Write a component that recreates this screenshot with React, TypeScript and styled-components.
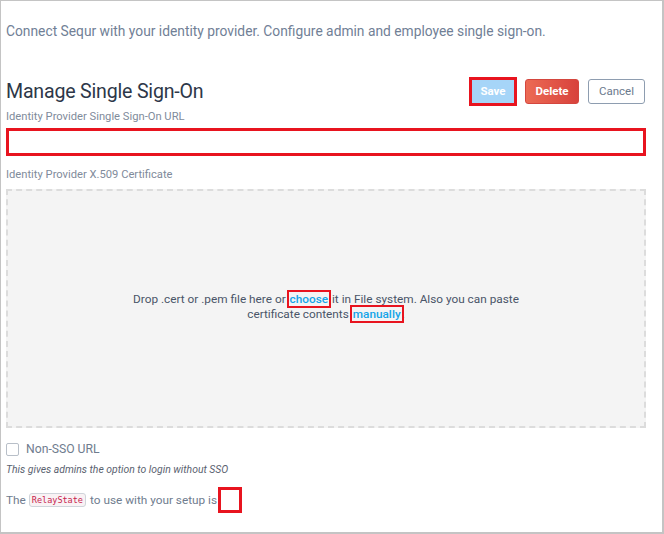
import React from "react";
import styled, { createGlobalStyle } from "styled-components";

const Global = createGlobalStyle`
  html, body { margin: 0; padding: 0; background: #fff; }
  body { font-family: Roboto, "Liberation Sans", Arial, sans-serif; }
  * { box-sizing: border-box; }
`;

const Frame = styled.div`
  width: 664px;
  height: 534px;
  border-top: 1px solid #c4c4c4;
  border-left: 1px solid #c4c4c4;
  border-right: 2px solid #c4c4c4;
  border-bottom: 2px solid #c4c4c4;
  padding: 0 17px 0 5px;
  overflow: hidden;
`;

const Intro = styled.p`
  margin: 21px 0 0;
  font-size: 13.8px;
  line-height: 18px;
  color: #718096;
`;

const HeaderRow = styled.div`
  display: flex;
  align-items: center;
  justify-content: space-between;
  margin-top: 38px;
  height: 26px;
`;

const Title = styled.h1`
  margin: 0;
  font-size: 19.6px;
  font-weight: 400;
  color: #2d3748;
  letter-spacing: -0.2px;
`;

const Actions = styled.div`
  display: flex;
  align-items: center;
  gap: 9px;
`;

const Mark = styled.span`
  display: inline-flex;
  border: 3px solid #e8141f;
  margin-right: -1px;
`;

const Button = styled.button<{ $variant: "save" | "delete" | "cancel" }>`
  height: ${(p) => (p.$variant === "save" ? "23px" : "25px")};
  width: ${(p) => (p.$variant === "save" ? "42px" : p.$variant === "delete" ? "54px" : "57px")};
  padding: 0;
  border-radius: ${(p) => (p.$variant === "save" ? "0" : "3px")};
  font-family: inherit;
  font-size: 11.5px;
  font-weight: ${(p) => (p.$variant === "cancel" ? 400 : 700)};
  cursor: pointer;
  border: 1px solid
    ${(p) =>
      p.$variant === "save" ? "#a6d5f8" : p.$variant === "delete" ? "#d4463e" : "#8e9db0"};
  background: ${(p) =>
    p.$variant === "save"
      ? "#a6d5f8"
      : p.$variant === "delete"
      ? "linear-gradient(90deg, #ec6a54, #d8423c)"
      : "#fff"};
  color: ${(p) => (p.$variant === "cancel" ? "#6b7a8d" : "#fff")};
`;

const Label = styled.div<{ $top: number }>`
  margin-top: ${(p) => p.$top}px;
  font-size: 11.2px;
  line-height: 14px;
  color: #7f8b9b;
`;

const UrlInput = styled.input`
  display: block;
  width: 640px;
  height: 28px;
  margin-top: 4px;
  border: 3px solid #e8141f;
  background: #fff;
  outline: none;
`;

const DropZone = styled.div`
  margin-top: 7px;
  width: 640px;
  height: 239px;
  background: #f4f4f4;
  border: 2px dashed #dcdcdc;
  display: flex;
  align-items: center;
  justify-content: center;
  text-align: center;
  padding-bottom: 3px;
`;

const DropText = styled.p`
  margin: 0;
  width: 420px;
  font-size: 11.8px;
  line-height: 15px;
  color: #4a5568;
`;

const Link = styled.a`
  color: #15a4e8;
  font-weight: 500;
  text-decoration: none;
  outline: 2px solid #e8141f;
  outline-offset: 0px;
  padding: 0 1px;
`;

const CheckRow = styled.label`
  display: flex;
  align-items: center;
  gap: 7px;
  margin-top: 14px;
  font-size: 12.2px;
  color: #6f7c8e;
`;

const Box = styled.span`
  width: 13px;
  height: 13px;
  border: 1px solid #b8bfc8;
  border-radius: 2px;
  background: #fff;
`;

const Hint = styled.div`
  margin-top: 7px;
  font-size: 10.4px;
  font-style: italic;
  color: #5a6270;
`;

const Relay = styled.div`
  display: flex;
  align-items: center;
  margin-top: 11px;
  font-size: 11.8px;
  color: #6f7c8e;
  height: 26px;
`;

const Code = styled.code`
  font-family: "DejaVu Sans Mono", "Liberation Mono", monospace;
  font-size: 8.5px;
  color: #c7254e;
  background: #f9f2f4;
  border: 1px solid #cfd4da;
  border-radius: 3px;
  padding: 1px 2px;
  margin: 0 4px 0 3px;
`;

const Empty = styled.span`
  display: inline-block;
  width: 24px;
  height: 26px;
  border: 3px solid #e8141f;
  margin-left: 1px;
`;

export default function App() {
  return (
    <>
      <Global />
      <Frame>
        <Intro>Connect Sequr with your identity provider. Configure admin and employee single sign-on.</Intro>
        <HeaderRow>
          <Title>Manage Single Sign-On</Title>
          <Actions>
            <Mark>
              <Button $variant="save">Save</Button>
            </Mark>
            <Button $variant="delete">Delete</Button>
            <Button $variant="cancel">Cancel</Button>
          </Actions>
        </HeaderRow>
        <Label $top={6}>Identity Provider Single Sign-On URL</Label>
        <UrlInput type="text" />
        <Label $top={12}>Identity Provider X.509 Certificate</Label>
        <DropZone>
          <DropText>
            Drop .cert or .pem file here or <Link>choose</Link> it in File system. Also you can paste
            certificate contents <Link>manually</Link>.
          </DropText>
        </DropZone>
        <CheckRow>
          <Box />
          Non-SSO URL
        </CheckRow>
        <Hint>This gives admins the option to login without SSO</Hint>
        <Relay>
          The <Code>RelayState</Code> to use with your setup is<Empty />
        </Relay>
      </Frame>
    </>
  );
}
